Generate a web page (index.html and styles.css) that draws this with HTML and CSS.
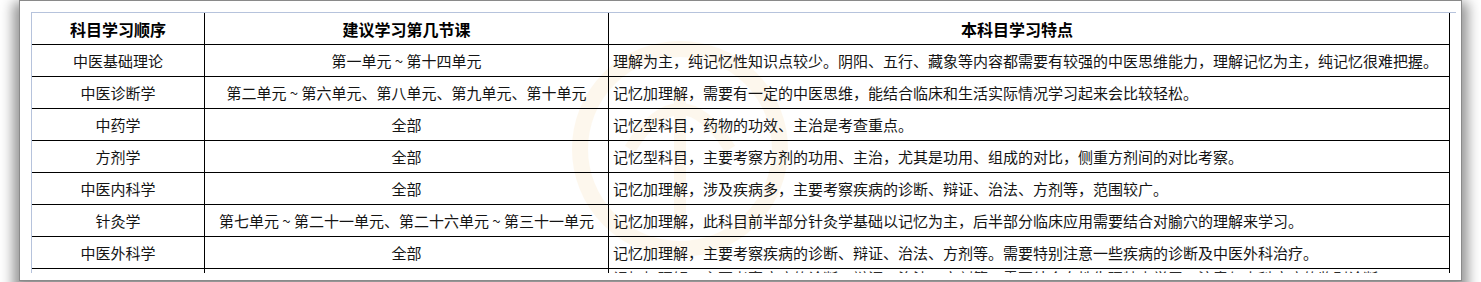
FILE: index.html
```html
<!DOCTYPE html>
<html lang="zh-CN">
<head>
<meta charset="utf-8">
<title>科目学习顺序</title>
<link rel="stylesheet" href="styles.css">
</head>
<body>
<div class="stage">
  <div class="card">
    <svg class="watermark" width="240" height="240" viewBox="0 0 240 240" aria-hidden="true">
      <circle cx="120" cy="120" r="100" fill="none" stroke="#f7c97a" stroke-width="16"/>
      <path d="M70 120 Q120 40 170 120" fill="none" stroke="#f7c97a" stroke-width="12"/>
      <path d="M120 60 L120 200" fill="none" stroke="#f7c97a" stroke-width="12"/>
    </svg>
    <div class="sheet">
      <div class="grid">
        <div class="cell head">科目学习顺序</div>
        <div class="cell head">建议学习第几节课</div>
        <div class="cell head head-desc">本科目学习特点</div>

        <div class="cell">中医基础理论</div>
        <div class="cell">第一单元 ~ 第十四单元</div>
        <div class="cell desc">理解为主，纯记忆性知识点较少。阴阳、五行、藏象等内容都需要有较强的中医思维能力，理解记忆为主，纯记忆很难把握。</div>

        <div class="cell">中医诊断学</div>
        <div class="cell">第二单元 ~ 第六单元、第八单元、第九单元、第十单元</div>
        <div class="cell desc">记忆加理解，需要有一定的中医思维，能结合临床和生活实际情况学习起来会比较轻松。</div>

        <div class="cell">中药学</div>
        <div class="cell">全部</div>
        <div class="cell desc">记忆型科目，药物的功效、主治是考查重点。</div>

        <div class="cell">方剂学</div>
        <div class="cell">全部</div>
        <div class="cell desc">记忆型科目，主要考察方剂的功用、主治，尤其是功用、组成的对比，侧重方剂间的对比考察。</div>

        <div class="cell">中医内科学</div>
        <div class="cell">全部</div>
        <div class="cell desc">记忆加理解，涉及疾病多，主要考察疾病的诊断、辩证、治法、方剂等，范围较广。</div>

        <div class="cell">针灸学</div>
        <div class="cell">第七单元 ~ 第二十一单元、第二十六单元 ~ 第三十一单元</div>
        <div class="cell desc">记忆加理解，此科目前半部分针灸学基础以记忆为主，后半部分临床应用需要结合对腧穴的理解来学习。</div>

        <div class="cell">中医外科学</div>
        <div class="cell">全部</div>
        <div class="cell desc">记忆加理解，主要考察疾病的诊断、辩证、治法、方剂等。需要特别注意一些疾病的诊断及中医外科治疗。</div>

        <div class="cell cut"></div>
        <div class="cell cut"></div>
        <div class="cell desc cut"><span class="cut-text">记忆加理解，主要考察疾病的诊断、辩证、治法、方剂等，需要结合女性生理特点学习，注意与内科疾病的鉴别诊断。</span></div>
      </div>
    </div>
  </div>
</div>
</body>
</html>
```

FILE: styles.css
```css
html, body {
  margin: 0;
  padding: 0;
  background: #ffffff;
}

body {
  width: 1481px;
  height: 282px;
  overflow: hidden;
  font-family: "Noto Sans CJK SC", "Noto Sans", sans-serif;
  color: #141414;
}

.stage {
  height: 282px;
  padding-left: 19px;
  box-sizing: border-box;
}

.card {
  position: relative;
  width: 1443px;
  height: 281px;
  box-sizing: border-box;
  border: 1px solid #8a8a8a;
  background: #ffffff;
  box-shadow: 0 8px 12px 6px rgba(0, 0, 0, 0.42);
  padding: 11px 0 0 11px;
  overflow: hidden;
}

.watermark {
  position: absolute;
  left: 540px;
  top: 28px;
  opacity: 0.13;
  pointer-events: none;
}

.sheet {
  position: relative;
  width: 1425px;
  height: 261px;
  box-sizing: border-box;
  border-top: 1px solid #b6c3dc;
  border-left: 1px solid #b6c3dc;
  overflow: hidden;
}

.grid {
  display: grid;
  grid-template-columns: 173px 404px 841px;
  grid-auto-rows: 32px;
}

.cell {
  box-sizing: border-box;
  border-right: 1px solid #000;
  border-bottom: 1px solid #000;
  display: flex;
  align-items: center;
  justify-content: center;
  font-size: 15px;
  line-height: 20px;
  white-space: nowrap;
}

.head {
  font-weight: 700;
  font-size: 16px;
  color: #000;
}

.head-desc {
  padding-right: 24px;
}

.desc {
  justify-content: flex-start;
  padding-left: 4px;
}

.cut {
  align-items: flex-start;
  line-height: 15px;
}

.cut-text {
  padding-top: 1px;
  color: #2a2a2a;
}
```
